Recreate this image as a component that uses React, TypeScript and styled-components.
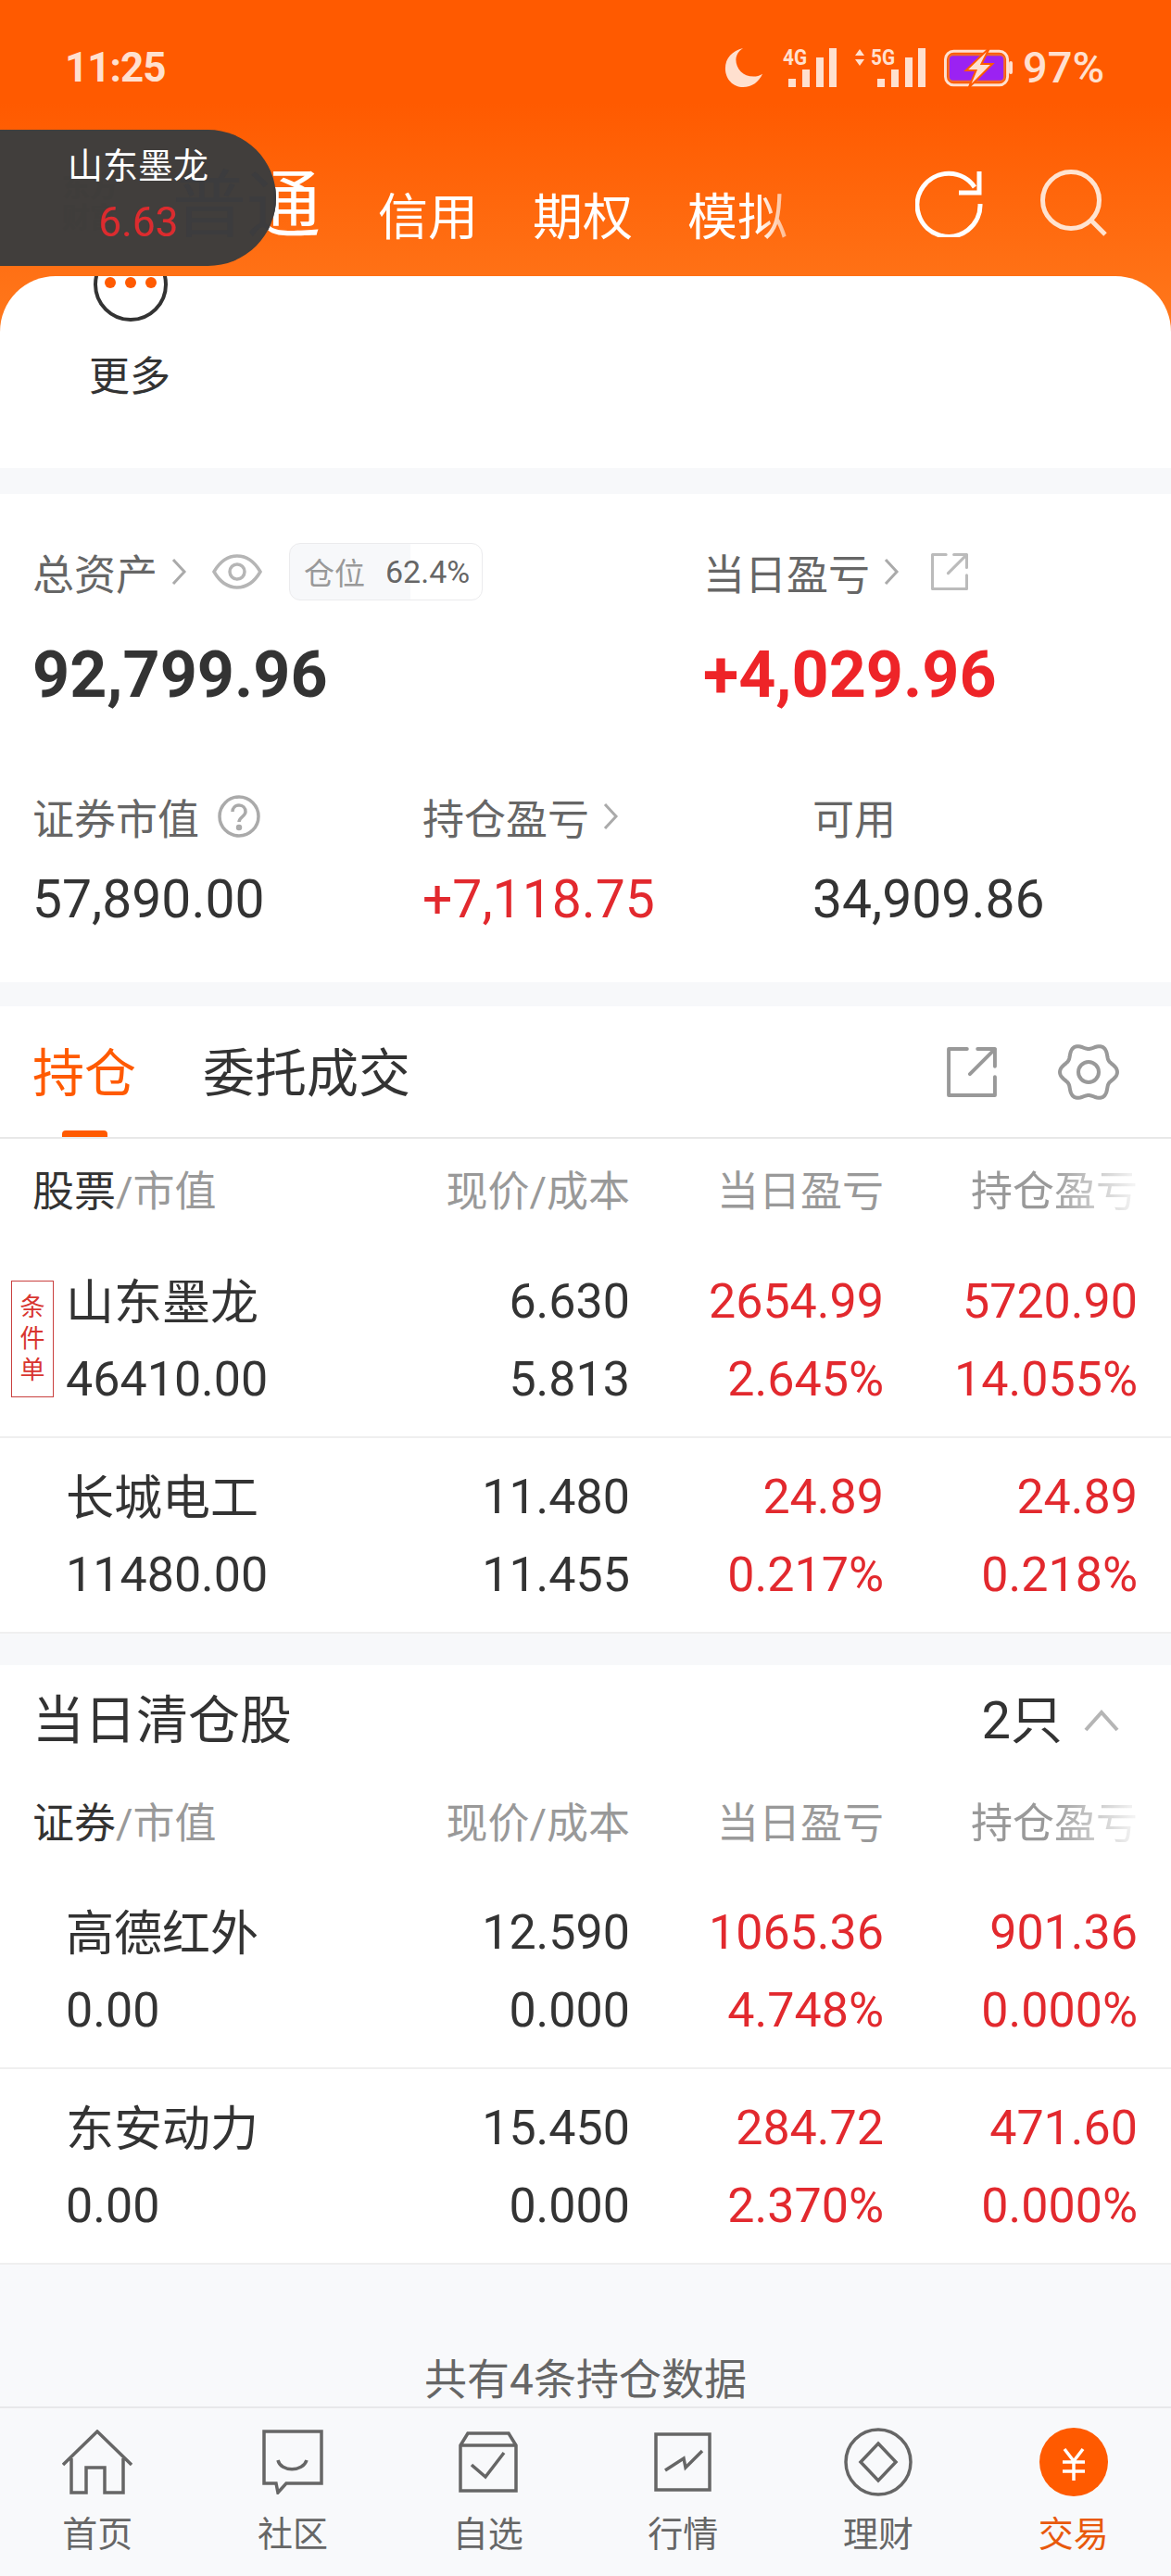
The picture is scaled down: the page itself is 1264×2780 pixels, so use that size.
import React from 'react';
import styled, { createGlobalStyle } from 'styled-components';

const GlobalStyle = createGlobalStyle`
  html, body {
    margin: 0;
    padding: 0;
    background: #f8f9fb;
  }
  * {
    box-sizing: border-box;
  }
`;

const FONT = `Roboto, "Noto Sans CJK SC", sans-serif`;
const RED = '#e2292e';
const ORANGE = '#ff5a00';

const Page = styled.div`
  position: relative;
  width: 1264px;
  height: 2780px;
  overflow: hidden;
  display: flex;
  flex-direction: column;
  background: #f8f9fb;
  font-family: ${FONT};
  color: #333;
`;

// Top orange area
const TopArea = styled.div`
  height: 505px;
  flex: none;
  background: linear-gradient(180deg, #ff5a00 0, #ff5a00 110px, #ff7a1e 370px);
  display: flex;
  flex-direction: column;
`;

const StatusBar = styled.div`
  height: 150px;
  padding: 47px 72px 0 70px;
  display: flex;
  justify-content: space-between;
  align-items: flex-start;
  color: #ffe0cf;
`;

const Clock = styled.div`
  font-size: 44px;
  line-height: 52px;
  font-weight: 700;
  letter-spacing: -1px;
`;

const StatusIcons = styled.div`
  display: flex;
  align-items: center;
  gap: 20px;
  height: 52px;
`;

const BatteryText = styled.span`
  font-size: 47px;
  line-height: 52px;
  font-weight: 500;
  margin-left: -10px;
`;

const ModeBar = styled.div`
  height: 148px;
  padding: 0 68px 23px 186px;
  display: flex;
  align-items: flex-end;
  color: #fff;
`;

const ModeMain = styled.div`
  font-size: 80px;
  line-height: 90px;
  width: 222px;
  margin-bottom: 8px;
`;

const ModeTab = styled.div<{ $fade?: boolean }>`
  font-size: 54px;
  line-height: 78px;
  width: 167px;
  ${({ $fade }) =>
    $fade &&
    `-webkit-mask-image: linear-gradient(90deg, #000 75px, rgba(0,0,0,.55) 106px);
     mask-image: linear-gradient(90deg, #000 75px, rgba(0,0,0,.55) 106px);`}
`;

const ModeActions = styled.div`
  margin-left: auto;
  display: flex;
  gap: 62px;
  padding-bottom: 19px;
`;

const Ticker = styled.div`
  position: absolute;
  left: 0;
  top: 140px;
  width: 298px;
  height: 147px;
  border-radius: 0 74px 74px 0;
  background: #413e3c;
  overflow: hidden;
  display: flex;
  flex-direction: column;
  align-items: center;
  padding: 14px 0 0 0;
`;

const TickerName = styled.div`
  position: relative;
  font-size: 38px;
  line-height: 50px;
  color: #fff;
`;

const TickerPrice = styled.div`
  position: relative;
  font-size: 44px;
  line-height: 64px;
  margin-top: 4px;
  color: #dc2b2e;
`;

const GhostLogo = styled.div`
  position: absolute;
  left: 67px;
  top: 45px;
  font-size: 30px;
  line-height: 33px;
  font-weight: 700;
  color: #3f3d3b;
`;

const GhostMode = styled.div`
  position: absolute;
  left: 186px;
  top: 37px;
  font-size: 80px;
  line-height: 90px;
  white-space: nowrap;
  color: #3c3c3e;
`;

const MoreCard = styled.div`
  height: 207px;
  background: #fff;
  border-radius: 60px 60px 0 0;
  overflow: hidden;
  padding-left: 96px;
`;

const MoreIcon = styled.div`
  width: 80px;
  height: 80px;
  margin: -31px 0 0 5px;
  border: 4px solid #333;
  border-radius: 50%;
  display: flex;
  justify-content: center;
  align-items: center;
  gap: 10px;
  & > i {
    width: 12px;
    height: 12px;
    border-radius: 50%;
    background: ${ORANGE};
    margin-top: -4px;
  }
`;

const MoreLabel = styled.div`
  font-size: 44px;
  line-height: 60px;
  margin-top: 30px;
  color: #333;
`;

const Gap = styled.div<{ $h: number }>`
  height: ${({ $h }) => $h}px;
  flex: none;
  background: #f7f8fa;
`;

// Assets card
const AssetCard = styled.section`
  height: 527px;
  flex: none;
  background: #fff;
  padding: 50px 35px 0;
`;

const AssetTop = styled.div`
  display: grid;
  grid-template-columns: 724px 1fr;
`;

const LabelRow = styled.div`
  display: flex;
  align-items: center;
  height: 68px;
  font-size: 45px;
  color: #666;
`;

const Arrow = styled.svg`
  width: 18px;
  height: 30px;
  margin-left: 14px;
  flex: none;
  fill: none;
  stroke: #aaa;
  stroke-width: 3;
`;

const EyeIcon = styled.svg`
  width: 54px;
  height: 38px;
  margin-left: 27px;
  flex: none;
  fill: none;
  stroke: #b5b5b5;
  stroke-width: 3.5;
`;

const Chip = styled.div`
  margin-left: 29px;
  width: 209px;
  height: 62px;
  border: 1.5px solid #ebebed;
  border-radius: 12px;
  overflow: hidden;
  display: flex;
  align-items: center;
  font-size: 34px;
  color: #666;
  background: linear-gradient(90deg, #f7f8fa 130px, #fff 130px);
`;

const ChipLabel = styled.span`
  font-size: 33px;
  color: #999;
  margin-left: 15px;
  margin-right: 22px;
`;

const ShareSmall = styled.span`
  display: flex;
  color: #bbb;
  margin-left: 34px;
`;

const HelpIcon = styled.svg`
  width: 48px;
  height: 48px;
  margin-left: 19px;
  fill: none;
  stroke: #aaa;
  stroke-width: 3.5;
`;

const BigValue = styled.div<{ $red?: boolean }>`
  font-size: 70px;
  line-height: 84px;
  font-weight: 700;
  margin-top: 35px;
  color: ${({ $red }) => ($red ? '#ee2428' : '#333')};
`;

const AssetBottom = styled.div`
  display: grid;
  grid-template-columns: 421px 421px 1fr;
  margin-top: 77px;
`;

const SmallValue = styled.div<{ $red?: boolean }>`
  font-size: 57px;
  line-height: 64px;
  margin-top: 24px;
  color: ${({ $red }) => ($red ? RED : '#333')};
`;

// Holdings
const HoldingCard = styled.section`
  flex: none;
  background: #fff;
`;

const TabBar = styled.div`
  position: relative;
  height: 143px;
  padding: 33px 35px 0;
  display: flex;
  align-items: flex-start;
  border-bottom: 2px solid #e8e8e8;
`;

const Tab = styled.div<{ $active?: boolean }>`
  font-size: 56px;
  line-height: 80px;
  margin-right: 72px;
  color: ${({ $active }) => ($active ? ORANGE : '#333')};
`;

const TabMark = styled.div`
  position: absolute;
  left: 67px;
  bottom: 0;
  width: 49px;
  height: 7px;
  border-radius: 4px 4px 0 0;
  background: ${ORANGE};
`;

const TabActions = styled.div`
  margin-left: auto;
  display: flex;
  align-items: center;
  gap: 66px;
  height: 66px;
  margin-top: 5px;
  padding-right: 21px;
  color: #999;
`;

const TableHead = styled.div<{ $h: number; $top: number }>`
  height: ${({ $h }) => $h}px;
  padding: ${({ $top }) => $top}px 36px 0 35px;
  display: grid;
  grid-template-columns: 371px 274px 274px 274px;
  align-items: flex-start;
  font-size: 45px;
  line-height: 66px;
  color: #999;
`;

const HeadTitle = styled.div`
  & > b {
    font-weight: 400;
    color: #333;
  }
`;

const HeadCell = styled.div<{ $fade?: boolean }>`
  text-align: right;
  ${({ $fade }) =>
    $fade &&
    `-webkit-mask-image: linear-gradient(90deg, #000 65%, rgba(0,0,0,.08) 100%);
     mask-image: linear-gradient(90deg, #000 65%, rgba(0,0,0,.08) 100%);`}
`;

const Row = styled.div`
  position: relative;
  height: 211px;
  padding: 21px 36px 0 35px;
  display: grid;
  grid-template-columns: 371px 274px 274px 274px;
  grid-auto-rows: 84px;
  align-items: center;
  font-size: 52px;
  border-bottom: 2px solid #efefef;
`;

const NameCell = styled.div<{ $title?: boolean }>`
  padding-left: 36px;
  padding-bottom: ${({ $title }) => ($title ? 5 : 0)}px;
  color: #333;
`;

const NumCell = styled.div<{ $red?: boolean }>`
  text-align: right;
  color: ${({ $red }) => ($red ? RED : '#333')};
`;

const OrderTag = styled.div`
  position: absolute;
  left: 12px;
  top: 41px;
  width: 46px;
  height: 126px;
  border: 1.5px solid #c9403f;
  display: flex;
  flex-direction: column;
  align-items: center;
  justify-content: center;
  font-size: 27px;
  line-height: 34px;
  color: #d8352f;
`;

const ClearTitle = styled.div`
  height: 118px;
  padding: 25px 36px 0 35px;
  display: flex;
  justify-content: space-between;
  font-size: 56px;
  line-height: 70px;
  color: #333;
`;

const ClearCount = styled.div`
  display: flex;
  align-items: center;
  gap: 22px;
  height: 70px;
  padding-right: 19px;
  color: #333;
`;

const CollapseIcon = styled.svg`
  width: 40px;
  height: 24px;
  fill: none;
  stroke: #b5b5b5;
  stroke-width: 4;
`;

const Footer = styled.div`
  height: 153px;
  flex: none;
  padding-top: 96px;
  text-align: center;
  font-size: 46px;
  line-height: 56px;
  color: #666;
`;

// Bottom nav
const BottomNav = styled.nav`
  height: 184px;
  flex: none;
  display: grid;
  grid-template-columns: repeat(6, 1fr);
  border-top: 2px solid #e8e8ea;
  background: #f8f9fb;
`;

const NavItem = styled.div<{ $active?: boolean }>`
  display: flex;
  flex-direction: column;
  align-items: center;
  padding-top: 20px;
  font-size: 38px;
  line-height: 48px;
  color: ${({ $active }) => ($active ? '#e8590c' : '#666')};
`;

const NavIcon = styled.div`
  width: 76px;
  height: 76px;
  margin-bottom: 16px;
  color: #666;
  display: flex;
  justify-content: center;
  align-items: center;
`;

type Holding = { name: string; value: string; price: string; cost: string; day: string; dayPct: string; total: string; totalPct: string; tag?: boolean };

const HOLDINGS: Holding[] = [
  { name: '山东墨龙', value: '46410.00', price: '6.630', cost: '5.813', day: '2654.99', dayPct: '2.645%', total: '5720.90', totalPct: '14.055%', tag: true },
  { name: '长城电工', value: '11480.00', price: '11.480', cost: '11.455', day: '24.89', dayPct: '0.217%', total: '24.89', totalPct: '0.218%' },
];

const CLEARED: Holding[] = [
  { name: '高德红外', value: '0.00', price: '12.590', cost: '0.000', day: '1065.36', dayPct: '4.748%', total: '901.36', totalPct: '0.000%' },
  { name: '东安动力', value: '0.00', price: '15.450', cost: '0.000', day: '284.72', dayPct: '2.370%', total: '471.60', totalPct: '0.000%' },
];

// wavy outline of the settings gear, six lobes
const GEAR_PATH =
  Array.from({ length: 120 }, (_, i) => {
    const a = (i / 120) * Math.PI * 2;
    const r = 28 + 3 * Math.cos(6 * a);
    return `${i === 0 ? 'M' : 'L'}${(33 + r * Math.cos(a)).toFixed(2)} ${(33 + r * Math.sin(a)).toFixed(2)}`;
  }).join('') + 'Z';

const HoldingRow = ({ item }: { item: Holding }) => (
  <Row>
    {item.tag && (
      <OrderTag>
        <span>条</span>
        <span>件</span>
        <span>单</span>
      </OrderTag>
    )}
    <NameCell $title>{item.name}</NameCell>
    <NumCell>{item.price}</NumCell>
    <NumCell $red>{item.day}</NumCell>
    <NumCell $red>{item.total}</NumCell>
    <NameCell>{item.value}</NameCell>
    <NumCell>{item.cost}</NumCell>
    <NumCell $red>{item.dayPct}</NumCell>
    <NumCell $red>{item.totalPct}</NumCell>
  </Row>
);

const Head = ({ first, h, top }: { first: string; h: number; top: number }) => (
  <TableHead $h={h} $top={top}>
    <HeadTitle>
      <b>{first}</b>/市值
    </HeadTitle>
    <HeadCell>现价/成本</HeadCell>
    <HeadCell>当日盈亏</HeadCell>
    <HeadCell $fade>持仓盈亏</HeadCell>
  </TableHead>
);

const ShareIcon = ({ size, stroke }: { size: number; stroke: number }) => (
  <svg width={size} height={size} viewBox="0 0 52 52" fill="none" stroke="currentColor" strokeWidth={stroke} strokeLinecap="round" strokeLinejoin="round">
    <path d="M21 2H2v48h48V31" />
    <path d="M24 28 50 2M32 2h18v18" />
  </svg>
);

const ChevronIcon = () => (
  <Arrow viewBox="0 0 18 30">
    <path d="M3 2l12 13L3 28" />
  </Arrow>
);

const Signal = ({ label, arrows }: { label: string; arrows?: boolean }) => (
  <svg width={arrows ? 76 : 58} height="42" viewBox={arrows ? '0 0 76 42' : '0 0 58 42'} fill="currentColor">
    {arrows && <path d="M0 8l5-7 5 7zM0 12h10l-5 7z" />}
    <text x={arrows ? 17 : 0} y="18" fontSize="24" fontWeight="700" fontFamily="Roboto, sans-serif" textLength="26" lengthAdjust="spacingAndGlyphs">{label}</text>
    <g transform={`translate(${arrows ? 24 : 6} 0)`}>
      <rect x="0" y="33" width="8" height="9" />
      <rect x="15" y="23" width="8" height="19" />
      <rect x="30" y="10" width="8" height="32" />
      <rect x="44" y="0" width="8" height="42" />
    </g>
  </svg>
);

const App: React.FC = () => (
  <Page>
    <GlobalStyle />
    <TopArea>
      <StatusBar>
        <Clock>11:25</Clock>
        <StatusIcons>
          <svg width="44" height="44" viewBox="0 0 46 46" fill="currentColor">
            <path d="M22 1C10 4 2 12 2 24c0 12 9 21 20 21 10 0 18-6 22-15-3 2-7 3-10 3-12 0-20-9-20-19 0-5 3-10 8-13z" />
          </svg>
          <Signal label="4G" />
          <Signal label="5G" arrows />
          <svg width="75" height="44" viewBox="0 0 76 44">
            <rect x="1.5" y="4" width="68" height="37" rx="9" fill="none" stroke="currentColor" strokeWidth="3" />
            <rect x="5" y="8" width="61" height="29" rx="5" fill="#9b22f2" stroke="#f06a2c" strokeWidth="2" />
            <rect x="71" y="15" width="4" height="14" rx="2" fill="currentColor" />
            <path d="M50 0 24 25h11l-8 19 26-26H41z" fill="#ffe0cf" stroke="#ff5a00" strokeWidth="2" />
          </svg>
          <BatteryText>97%</BatteryText>
        </StatusIcons>
      </StatusBar>
      <ModeBar>
        <ModeMain>普通</ModeMain>
        <ModeTab>信用</ModeTab>
        <ModeTab>期权</ModeTab>
        <ModeTab $fade>模拟</ModeTab>
        <ModeActions>
          <svg width="73" height="73" viewBox="0 0 73 73" fill="none" stroke="#fff" strokeWidth="5">
            <path d="M70 37A34 34 0 1 1 64 19" />
            <path d="M69 2v23H47" />
          </svg>
          <svg width="73" height="73" viewBox="0 0 73 73" fill="none" stroke="#ffe3d0" strokeWidth="5">
            <circle cx="33" cy="33" r="30.5" />
            <path d="M55 55l15 15" />
          </svg>
        </ModeActions>
      </ModeBar>
      <MoreCard>
        <MoreIcon>
          <i />
          <i />
          <i />
        </MoreIcon>
        <MoreLabel>更多</MoreLabel>
      </MoreCard>
    </TopArea>
    <Ticker>
      <GhostLogo>
        东方
        <br />
        财富
      </GhostLogo>
      <GhostMode>普通</GhostMode>
      <TickerName>山东墨龙</TickerName>
      <TickerPrice>6.63</TickerPrice>
    </Ticker>
    <Gap $h={28} />
    <AssetCard>
      <AssetTop>
        <div>
          <LabelRow>
            总资产
            <ChevronIcon />
            <EyeIcon viewBox="0 0 54 38">
              <path d="M2 19C9 7 17 2 27 2s18 5 25 17c-7 12-15 17-25 17S9 31 2 19z" />
              <circle cx="27" cy="19" r="8" />
            </EyeIcon>
            <Chip>
              <ChipLabel>仓位</ChipLabel>
              <span>62.4%</span>
            </Chip>
          </LabelRow>
          <BigValue>92,799.96</BigValue>
        </div>
        <div>
          <LabelRow>
            当日盈亏
            <ChevronIcon />
            <ShareSmall>
              <ShareIcon size={40} stroke={4} />
            </ShareSmall>
          </LabelRow>
          <BigValue $red>+4,029.96</BigValue>
        </div>
      </AssetTop>
      <AssetBottom>
        <div>
          <LabelRow>
            证券市值
            <HelpIcon viewBox="0 0 48 48">
              <circle cx="24" cy="24" r="21" />
              <path d="M17 19c0-4 3-7 7-7s7 3 7 7c0 5-7 6-7 11" />
              <circle cx="24" cy="36" r="1.5" />
            </HelpIcon>
          </LabelRow>
          <SmallValue>57,890.00</SmallValue>
        </div>
        <div>
          <LabelRow>
            持仓盈亏
            <ChevronIcon />
          </LabelRow>
          <SmallValue $red>+7,118.75</SmallValue>
        </div>
        <div>
          <LabelRow>可用</LabelRow>
          <SmallValue>34,909.86</SmallValue>
        </div>
      </AssetBottom>
    </AssetCard>
    <Gap $h={26} />
    <HoldingCard>
      <TabBar>
        <Tab $active>持仓</Tab>
        <Tab>委托成交</Tab>
        <TabMark />
        <TabActions>
          <ShareIcon size={54} stroke={3.8} />
          <svg width="66" height="66" viewBox="0 0 66 66" fill="none" stroke="currentColor" strokeWidth="4" strokeLinejoin="round">
            <path d={GEAR_PATH} />
            <circle cx="33" cy="33" r="11" />
          </svg>
        </TabActions>
      </TabBar>
      <Head first="股票" h={112} top={25} />
      {HOLDINGS.map((item) => (
        <HoldingRow key={item.name} item={item} />
      ))}
    </HoldingCard>
    <Gap $h={34} />
    <HoldingCard>
      <ClearTitle>
        当日清仓股
        <ClearCount>
          2只
          <CollapseIcon viewBox="0 0 40 24">
            <path d="M3 22 20 3l17 19" />
          </CollapseIcon>
        </ClearCount>
      </ClearTitle>
      <Head first="证券" h={107} top={21} />
      {CLEARED.map((item) => (
        <HoldingRow key={item.name} item={item} />
      ))}
    </HoldingCard>
    <Footer>共有4条持仓数据</Footer>
    <BottomNav>
      <NavItem>
        <NavIcon>
          <svg width="76" height="70" viewBox="0 0 76 70" fill="none" stroke="currentColor" strokeWidth="3.5">
            <path d="M1 38 38 2l37 36M10 31v37h16V41h20v27h20V31" />
          </svg>
        </NavIcon>
        首页
      </NavItem>
      <NavItem>
        <NavIcon>
          <svg width="66" height="70" viewBox="0 0 66 70" fill="none" stroke="currentColor" strokeWidth="3.5">
            <path d="M2 2h62v56H26l-9 10-2-10H2z" />
            <path d="M17 33c3 13 27 13 31 0" />
          </svg>
        </NavIcon>
        社区
      </NavItem>
      <NavItem>
        <NavIcon>
          <svg width="64" height="66" viewBox="0 0 64 66" fill="none" stroke="currentColor" strokeWidth="3.5">
            <path d="M10 2h44l8 13v49H2V15zM2 15h60" />
            <path d="M14 36l15 13 20-26" />
          </svg>
        </NavIcon>
        自选
      </NavItem>
      <NavItem>
        <NavIcon>
          <svg width="62" height="64" viewBox="0 0 62 64" fill="none" stroke="currentColor" strokeWidth="3.5">
            <rect x="2" y="2" width="58" height="60" />
            <path d="M12 41l20-13 2 10 18-18" />
          </svg>
        </NavIcon>
        行情
      </NavItem>
      <NavItem>
        <NavIcon>
          <svg width="74" height="74" viewBox="0 0 74 74" fill="none" stroke="currentColor" strokeWidth="3.5">
            <circle cx="37" cy="37" r="35" />
            <path d="M37 17 56 37 37 57 18 37z" />
          </svg>
        </NavIcon>
        理财
      </NavItem>
      <NavItem $active>
        <NavIcon>
          <svg width="74" height="74" viewBox="0 0 74 74">
            <circle cx="37" cy="37" r="37" fill={ORANGE} />
            <path d="M27 23l10 13 10-13M37 36v21M25 37h24M25 47h24" fill="none" stroke="#fff" strokeWidth="3.5" />
          </svg>
        </NavIcon>
        交易
      </NavItem>
    </BottomNav>
  </Page>
);

export default App;
